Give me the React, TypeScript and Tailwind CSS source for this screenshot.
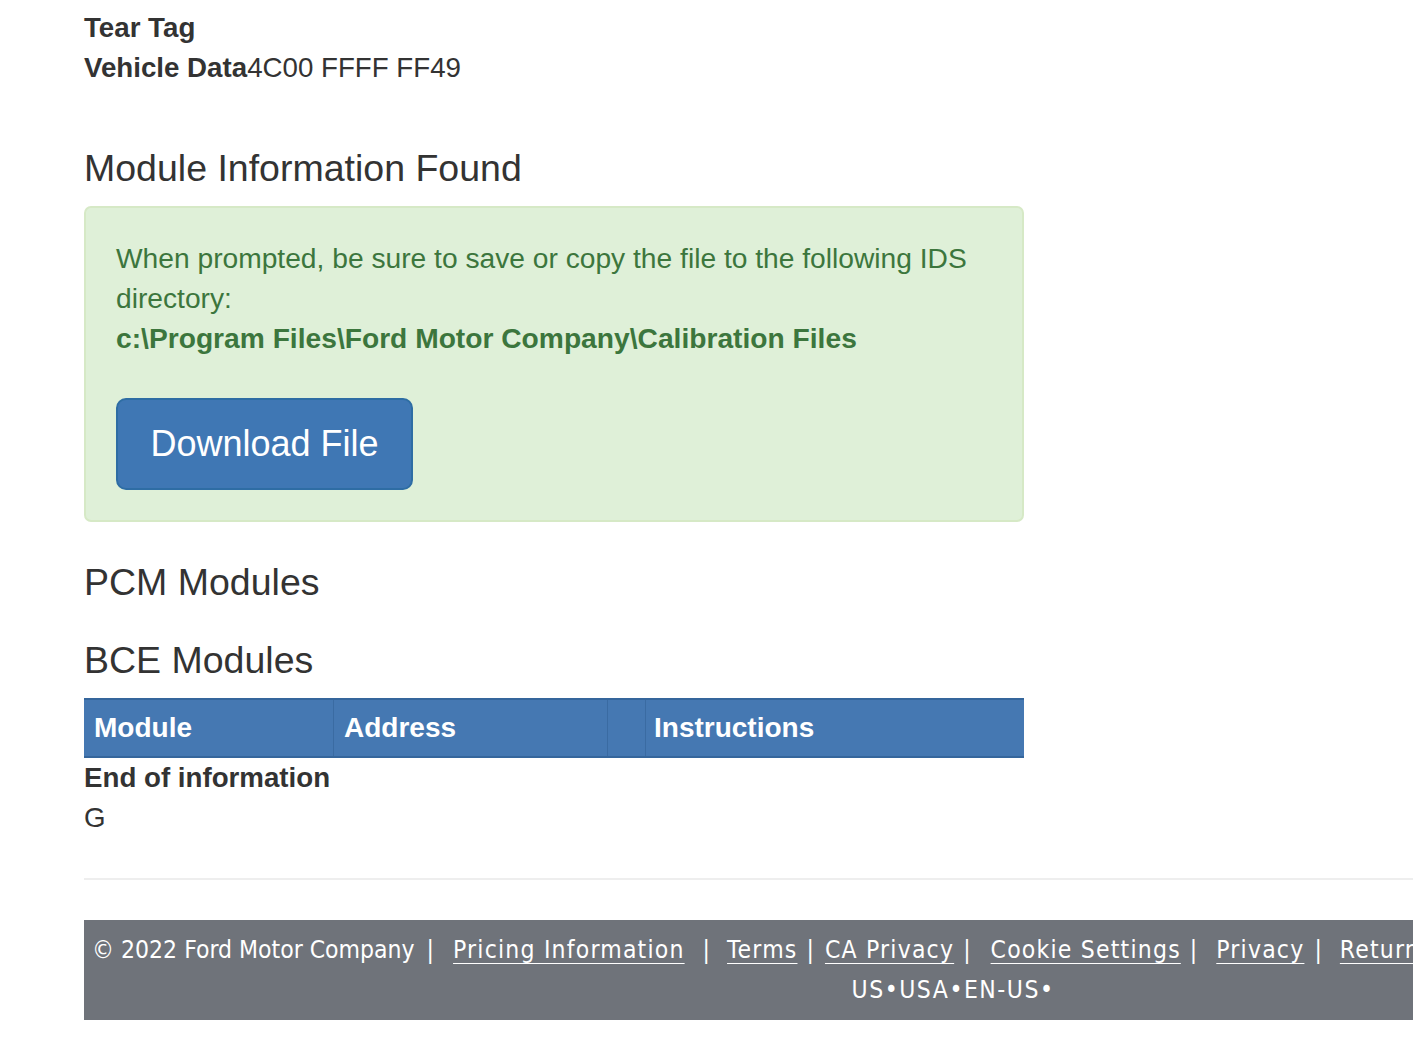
const body = "font-['Helvetica_Neue','Liberation_Sans',Arial,sans-serif]"

function FooterLink({ children }: { children: React.ReactNode }) {
  return (
    <a href="#" className="tracking-[1.2px] text-white underline decoration-1 underline-offset-[5px]">
      {children}
    </a>
  )
}

export default function App() {
  return (
    <div className={`min-h-[1060px] w-[1413px] overflow-hidden bg-white pt-[9px] text-[#333] ${body}`}>
      <div className="pl-[84px]">
        <div className="text-[27.7px] leading-[40px]">
          <div className="-mt-[1px] font-bold">Tear Tag</div>
          <div>
            <span className="font-bold">Vehicle Data</span>4C00 FFFF FF49
          </div>
        </div>

        <h3 className="mt-[59px] text-[37.5px] leading-[42px] font-medium">
          Module Information Found
        </h3>

        <div className="mt-[17px] w-[940px] rounded-[7px] border-2 border-[#d6e9c6] bg-[#dff0d8] px-[30px] pt-[30px] pb-[30px] text-[28.2px] leading-[40px] text-[#3c763d]">
          <p>
            When prompted, be sure to save or copy the file to the following IDS directory:
            <br />
            <b>c:\Program Files\Ford Motor Company\Calibration Files</b>
          </p>
          <button className="mt-[40px] h-[92px] w-[297px] rounded-[10px] border-2 border-[#2e6da4] bg-[#3f77b4] text-[36px] text-white">
            Download File
          </button>
        </div>

        <h3 className="mt-[39px] text-[37.5px] leading-[42px] font-medium">PCM Modules</h3>
        <h3 className="mt-[36px] text-[37.5px] leading-[42px] font-medium">BCE Modules</h3>

        <div className="mt-[17px] grid h-[60px] w-[940px] grid-cols-[250px_274px_38px_1fr] border-y-2 border-[#35669c] bg-[#4578b2] text-[28px] font-bold text-white">
          <div className="flex items-center border-r border-[#3a6ba2] pl-[10px]">Module</div>
          <div className="flex items-center border-r border-[#3a6ba2] pl-[10px]">Address</div>
          <div className="border-r border-[#3a6ba2]" />
          <div className="flex items-center pl-[8px]">Instructions</div>
        </div>

        <div className="text-[27.7px] leading-[40px]">
          <div className="font-bold">End of information</div>
          <div>G</div>
        </div>

        <div className="mt-[40px] h-[2px] w-[1400px] bg-[#eeeeee]" />

        <footer className="mt-[40px] h-[100px] w-[1738px] bg-[#6f737a] pt-[10px] font-['DejaVu_Sans_Condensed','DejaVu_Sans',sans-serif] text-[24.5px] leading-[40px] text-white">
          <div className="flex items-baseline whitespace-nowrap pl-[8px]">
            <span>© 2022 Ford Motor Company</span>
            <span className="ml-[12px] mr-[19px]">|</span>
            <FooterLink>Pricing Information</FooterLink>
            <span className="ml-[18px] mr-[17px]">|</span>
            <FooterLink>Terms</FooterLink>
            <span className="ml-[9px] mr-[11px]">|</span>
            <FooterLink>CA Privacy</FooterLink>
            <span className="ml-[9px] mr-[20px]">|</span>
            <FooterLink>Cookie Settings</FooterLink>
            <span className="ml-[9px] mr-[19px]">|</span>
            <FooterLink>Privacy</FooterLink>
            <span className="ml-[10px] mr-[18px]">|</span>
            <FooterLink>Return Policy</FooterLink>
          </div>
          <div className="text-center tracking-[1.5px]">US•USA•EN-US•</div>
        </footer>
      </div>
    </div>
  )
}
